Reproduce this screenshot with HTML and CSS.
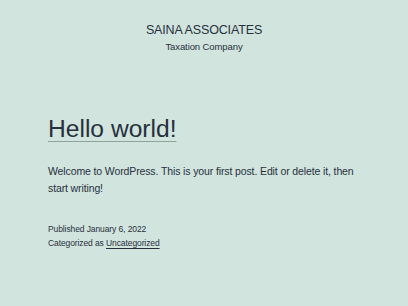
FILE: index.html
```html
<!DOCTYPE html>
<html lang="en">
<head>
  <meta charset="UTF-8" />
  <title>SAINA ASSOCIATES</title>
  <link rel="stylesheet" href="styles.css">
</head>
<body>
  <header class="site-header">
    <p class="site-title">SAINA ASSOCIATES</p>
    <p class="site-description">Taxation Company</p>
  </header>

  <main class="site-main">
    <article class="post">
      <h2 class="entry-title"><a href="#">Hello world!</a></h2>
      <p class="entry-content">Welcome to WordPress. This is your first post. Edit or delete it, then start writing!</p>
      <footer class="entry-footer">
        <p>Published January 6, 2022</p>
        <p>Categorized as <a href="#">Uncategorized</a></p>
      </footer>
    </article>
  </main>
</body>
</html>
```

FILE: styles.css
```css
* {
  margin: 0;
  padding: 0;
  box-sizing: border-box;
}

body {
  background-color: #d1e4dd;
  color: #28303d;
  font-family: "Liberation Sans", Arial, sans-serif;
  min-height: 100vh;
}

a {
  color: #28303d;
}

.site-header {
  text-align: center;
  padding-top: 22px;
}

.site-title {
  font-size: 12.5px;
  line-height: 16px;
  letter-spacing: -0.15px;
}

.site-description {
  font-size: 9.5px;
  line-height: 14px;
  margin-top: 2px;
  letter-spacing: -0.1px;
}

.site-main {
  padding: 0 48px;
  margin-top: 60px;
}

.entry-title {
  font-size: 24.6px;
  font-weight: normal;
  line-height: 30px;
}

.entry-title a {
  text-decoration: underline;
  text-decoration-thickness: 1px;
  text-underline-offset: 4px;
  text-decoration-color: #8fa39c;
}

.entry-content {
  font-size: 10.5px;
  line-height: 17px;
  margin-top: 19px;
  letter-spacing: -0.12px;
}

.entry-footer {
  margin-top: 25px;
  font-size: 8.5px;
  line-height: 14px;
  letter-spacing: -0.1px;
}

.entry-footer a {
  text-underline-offset: 2px;
}
```
